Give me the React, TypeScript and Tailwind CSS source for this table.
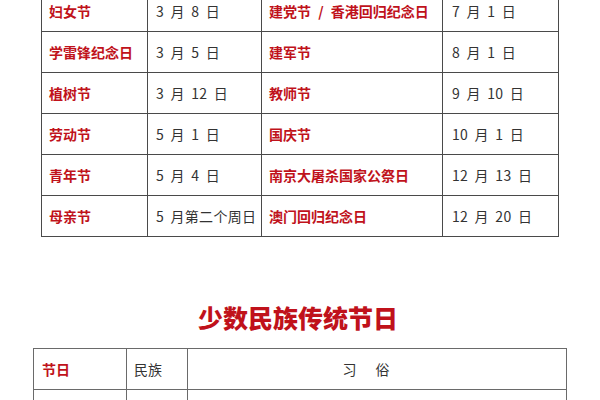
import React from "react";

const font = { fontFamily: '"Noto Sans CJK SC", "Noto Sans", sans-serif' };

const rows: [string, string, string, string][] = [
  ["妇女节", "3 月 8 日", "建党节 / 香港回归纪念日", "7 月 1 日"],
  ["学雷锋纪念日", "3 月 5 日", "建军节", "8 月 1 日"],
  ["植树节", "3 月 12 日", "教师节", "9 月 10 日"],
  ["劳动节", "5 月 1 日", "国庆节", "10 月 1 日"],
  ["青年节", "5 月 4 日", "南京大屠杀国家公祭日", "12 月 13 日"],
  ["母亲节", "5 月第二个周日", "澳门回归纪念日", "12 月 20 日"],
];

export default function App() {
  return (
    <div className="w-[600px] h-[400px] overflow-hidden bg-white" style={font}>
      <div className="mt-[-10px] ml-[41px] w-[518px] border border-[#4a4a4a] bg-[#4a4a4a] grid grid-cols-[105px_113px_180px_115px] gap-px">
        {rows.map((r, i) => (
          <React.Fragment key={i}>
            <div className="bg-white h-[40px] flex items-center pl-[7px] text-[14px] font-bold text-[#c0121b] whitespace-nowrap">
              {r[0]}
            </div>
            <div className="bg-white h-[40px] flex items-center pl-[8px] text-[14px] text-[#333] whitespace-pre [word-spacing:3px] tracking-[0.3px]">
              {r[1]}
            </div>
            <div className="bg-white h-[40px] flex items-center pl-[7px] text-[14px] font-bold text-[#c0121b] whitespace-pre [word-spacing:4px]">
              {r[2]}
            </div>
            <div className="bg-white h-[40px] flex items-center pl-[9px] text-[14px] text-[#333] whitespace-pre [word-spacing:3px] tracking-[0.3px]">
              {r[3]}
            </div>
          </React.Fragment>
        ))}
      </div>
      <div className="mt-[62px] h-[36px] leading-[36px] text-center text-[25px] font-black text-[#c0121b] pr-[4px]">
        少数民族传统节日
      </div>
      <div className="mt-[13px] ml-[33px] w-[534px] border border-[#6a6a6a] bg-[#6a6a6a] grid grid-cols-[92px_60px_378px] gap-px">
        <div className="bg-white h-[40px] flex items-center pl-[8px] text-[14px] font-bold text-[#c0121b]">节日</div>
        <div className="bg-white h-[40px] flex items-center pl-[7px] text-[14px] text-[#333]">民族</div>
        <div className="bg-white h-[40px] flex items-center justify-center pr-[22px] text-[14px] text-[#333] whitespace-pre">习      俗</div>
        <div className="bg-white h-[40px]"></div>
        <div className="bg-white h-[40px]"></div>
        <div className="bg-white h-[40px]"></div>
      </div>
    </div>
  );
}
